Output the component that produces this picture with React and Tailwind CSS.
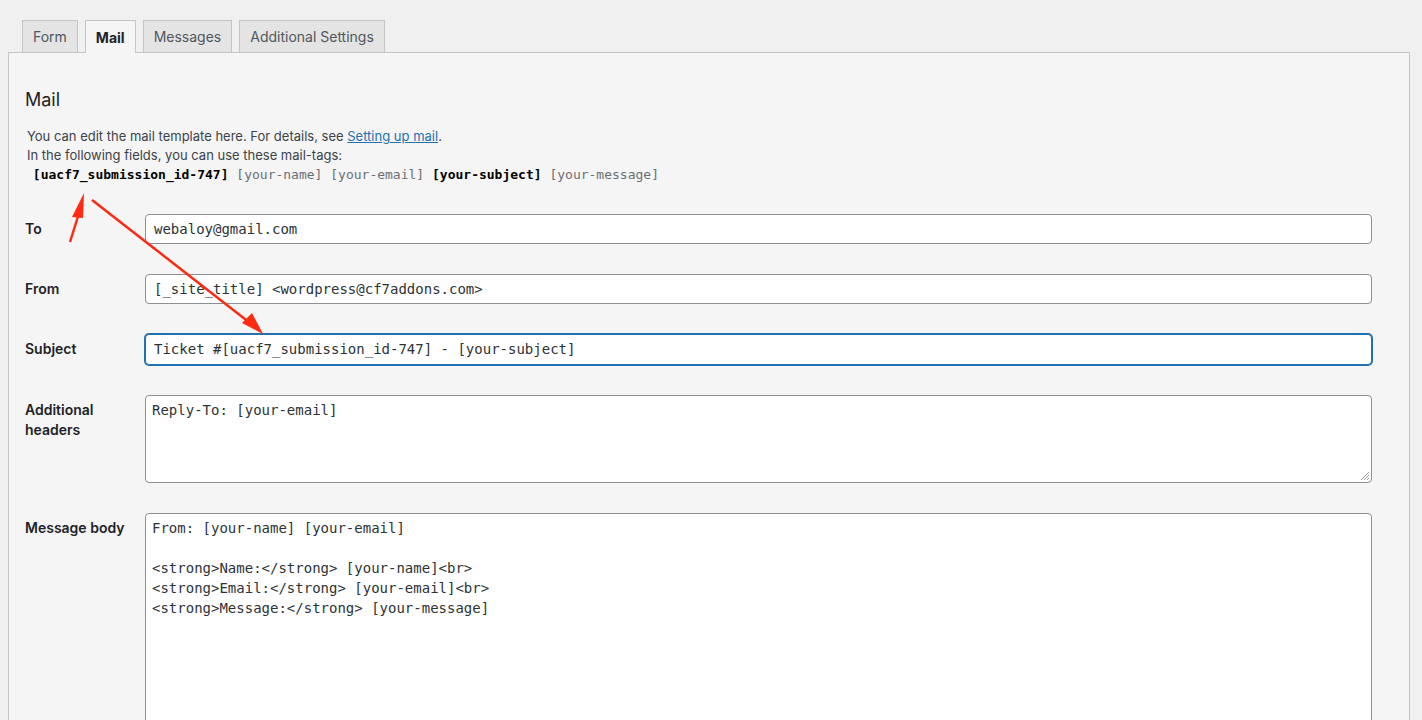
import React from "react";

const sans = { fontFamily: "Inter, 'Liberation Sans', sans-serif" };
const mono = { fontFamily: "'DejaVu Sans Mono', 'Liberation Mono', monospace" };

function Row({ label, children }) {
  return (
    <div className="flex py-[15px]">
      <div className="w-[120px] shrink-0 pt-[5px] text-[14px] leading-5 font-semibold text-[#1d2327]">
        {label}
      </div>
      <div className="flex-1">{children}</div>
    </div>
  );
}

function Input({ value, focused }) {
  return (
    <div
      className={
        focused
          ? "h-[31px] bg-white rounded border border-[#2271b1] shadow-[0_0_0_1px_#2271b1] px-2 flex items-center text-[14px] text-[#2c3338]"
          : "h-[30px] bg-white rounded border border-[#8c8f94] px-2 flex items-center text-[14px] text-[#2c3338]"
      }
      style={mono}
    >
      {value}
    </div>
  );
}

function Textarea({ lines, h, grip }) {
  return (
    <div
      className={`relative bg-white rounded border border-[#8c8f94] px-[6px] py-[4px] text-[14px] leading-5 text-[#2c3338] whitespace-pre ${h}`}
      style={mono}
    >
      {lines.join("\n")}
      {grip && (
        <svg className="absolute right-[1px] bottom-[1px]" width="12" height="12" viewBox="0 0 12 12">
          <path d="M11 3 L3 11 M11 6 L6 11 M11 9 L9 11" stroke="#9a9a9a" strokeWidth="1" />
        </svg>
      )}
    </div>
  );
}

export default function App() {
  const tabs = ["Form", "Mail", "Messages", "Additional Settings"];
  return (
    <div className="relative min-h-[720px] h-[720px] overflow-hidden bg-[#f0f0f1] pl-2 pt-5" style={sans}>
      {/* Tabs */}
      <div className="flex pl-[14px] gap-[7px] relative z-10">
        {tabs.map((t) =>
          t === "Mail" ? (
            <div
              key={t}
              className="h-[33px] px-[10px] flex items-center border border-b-0 border-[#c3c4c7] bg-[#f5f5f5] text-[14px] font-bold text-[#1d2327]"
            >
              {t}
            </div>
          ) : (
            <div
              key={t}
              className="h-[32px] px-[10px] flex items-center border border-b-0 border-[#c3c4c7] bg-[#e4e4e4] text-[14px] text-[#50575e]"
            >
              {t}
            </div>
          )
        )}
      </div>

      {/* Panel */}
      <div className="-mt-px w-[1402px] h-[700px] border border-[#c3c4c7] bg-[#f5f5f5] pl-4 pr-[37px] pt-[35px]">
        <h2 className="text-[18px] leading-6 text-[#1d2327]">Mail</h2>
        <div className="mt-[15px] pl-[2px] text-[13px] leading-[19px] text-[#3c434a]">
          <p>
            You can edit the mail template here. For details, see{" "}
            <span className="text-[#2271b1] underline">Setting up mail</span>.
          </p>
          <p>In the following fields, you can use these mail-tags:</p>
          <p className="-ml-[2px] text-[13px] whitespace-pre" style={mono}>
            {" "}
            <span className="font-bold text-[#000]">[uacf7_submission_id-747]</span>{" "}
            <span className="text-[#6b6f74]">[your-name]</span>{" "}
            <span className="text-[#6b6f74]">[your-email]</span>{" "}
            <span className="font-bold text-[#000]">[your-subject]</span>{" "}
            <span className="text-[#6b6f74]">[your-message]</span>
          </p>
        </div>

        <div className="mt-[15px]">
          <Row label="To">
            <Input value="webaloy@gmail.com" />
          </Row>
          <Row label="From">
            <Input value="[_site_title] <wordpress@cf7addons.com>" />
          </Row>
          <Row label="Subject">
            <Input value="Ticket #[uacf7_submission_id-747] - [your-subject]" focused />
          </Row>
          <Row
            label={
              <>
                Additional
                <br />
                headers
              </>
            }
          >
            <Textarea lines={["Reply-To: [your-email]"]} h="h-[88px]" grip />
          </Row>
          <Row label="Message body">
            <Textarea
              lines={[
                "From: [your-name] [your-email]",
                "",
                "<strong>Name:</strong> [your-name]<br>",
                "<strong>Email:</strong> [your-email]<br>",
                "<strong>Message:</strong> [your-message]",
              ]}
              h="h-[300px]"
            />
          </Row>
        </div>
      </div>

      {/* Annotation arrows */}
      <svg className="absolute left-0 top-0 pointer-events-none" width="1422" height="720">
        <line x1="70" y1="242" x2="80" y2="210" stroke="#ff2a12" strokeWidth="2.5" />
        <polygon points="84,193 72,217 83,218" fill="#ff2a12" />
        <line x1="92" y1="200" x2="250" y2="323" stroke="#ff2a12" strokeWidth="2.5" />
        <polygon points="263,334 242,323 252,313" fill="#ff2a12" />
      </svg>
    </div>
  );
}
